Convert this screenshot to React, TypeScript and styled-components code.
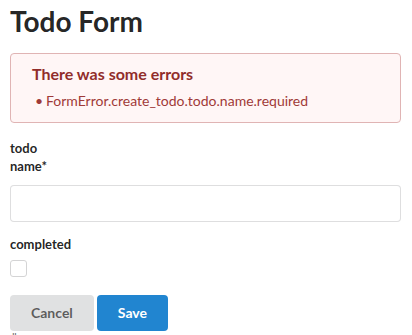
import React from 'react'
import styled, { createGlobalStyle } from 'styled-components'

const GlobalStyle = createGlobalStyle`
  html, body {
    margin: 0;
    padding: 0;
    background: #ffffff;
  }
  body {
    font-family: Lato, "Helvetica Neue", Arial, sans-serif;
    font-size: 14px;
    line-height: 1.4285em;
    color: rgba(0, 0, 0, 0.87);
  }
`

const Page = styled.div`
  display: flex;
  flex-direction: column;
  padding: 3px 11px 0 10px;
`

const Title = styled.h1`
  margin: 0 0 14px;
  font-size: 28px;
  line-height: 36px;
  font-weight: 700;
  color: rgba(0, 0, 0, 0.87);
`

const ErrorMessage = styled.div`
  background: #fff6f6;
  border: 1px solid #e0b4b4;
  border-radius: 4px;
  color: #9f3a38;
  padding: 10px 21px 12px;
`

const ErrorHeader = styled.div`
  font-size: 16px;
  font-weight: 700;
  line-height: 20px;
  color: #912d2b;
`

const ErrorList = styled.ul`
  list-style: none;
  margin: 7px 0 0;
  padding: 0;
`

const ErrorItem = styled.li`
  position: relative;
  margin-left: 14px;
  font-size: 14px;
  line-height: 19px;
  &::before {
    content: '•';
    position: absolute;
    left: -11px;
    top: 0;
  }
`

const Form = styled.form`
  display: flex;
  flex-direction: column;
  margin-top: 17px;
`

const GroupTitle = styled.div`
  font-size: 13px;
  font-weight: 700;
  line-height: 16px;
  margin-bottom: 2px;
`

const Field = styled.div<{ $gap: number }>`
  display: flex;
  flex-direction: column;
  gap: ${({ $gap }) => $gap}px;
  margin-bottom: 14px;
`

const Label = styled.label`
  font-size: 13px;
  font-weight: 700;
  line-height: 16px;
`

const TextInput = styled.input`
  box-sizing: border-box;
  height: 37px;
  width: 100%;
  border: 1px solid rgba(34, 36, 38, 0.15);
  border-radius: 4px;
  padding: 9px 14px;
  font-family: inherit;
  font-size: 14px;
  outline: none;
`

const Checkbox = styled.span`
  display: block;
  box-sizing: border-box;
  width: 17px;
  height: 17px;
  border: 1px solid #d4d4d5;
  border-radius: 3px;
  background: #ffffff;
`

const Actions = styled.div`
  display: flex;
  gap: 3px;
  margin-top: 4px;
`

const Button = styled.button<{ $primary?: boolean }>`
  height: 36px;
  padding: 0 21px;
  border: none;
  border-radius: 4px;
  font-family: inherit;
  font-size: 14px;
  font-weight: 700;
  line-height: 1em;
  background: ${({ $primary }) => ($primary ? '#2185d0' : '#e0e1e2')};
  color: ${({ $primary }) => ($primary ? '#ffffff' : 'rgba(0, 0, 0, 0.6)')};
  cursor: pointer;
`

const Debug = styled.pre`
  margin: 1px 0 0 2px;
  font-family: Lato, sans-serif;
  font-size: 13px;
  line-height: 13px;
  color: rgba(0, 0, 0, 0.6);
`

export default function App() {
  return (
    <Page>
      <GlobalStyle />
      <Title>Todo Form</Title>
      <ErrorMessage>
        <ErrorHeader>There was some errors</ErrorHeader>
        <ErrorList>
          <ErrorItem>FormError.create_todo.todo.name.required</ErrorItem>
        </ErrorList>
      </ErrorMessage>
      <Form onSubmit={(e) => e.preventDefault()}>
        <GroupTitle>todo</GroupTitle>
        <Field $gap={11}>
          <Label>name*</Label>
          <TextInput type="text" />
        </Field>
        <Field $gap={8}>
          <Label>completed</Label>
          <Checkbox />
        </Field>
        <Actions>
          <Button type="button">Cancel</Button>
          <Button type="submit" $primary>Save</Button>
        </Actions>
      </Form>
      <Debug>{'"'}</Debug>
    </Page>
  )
}
